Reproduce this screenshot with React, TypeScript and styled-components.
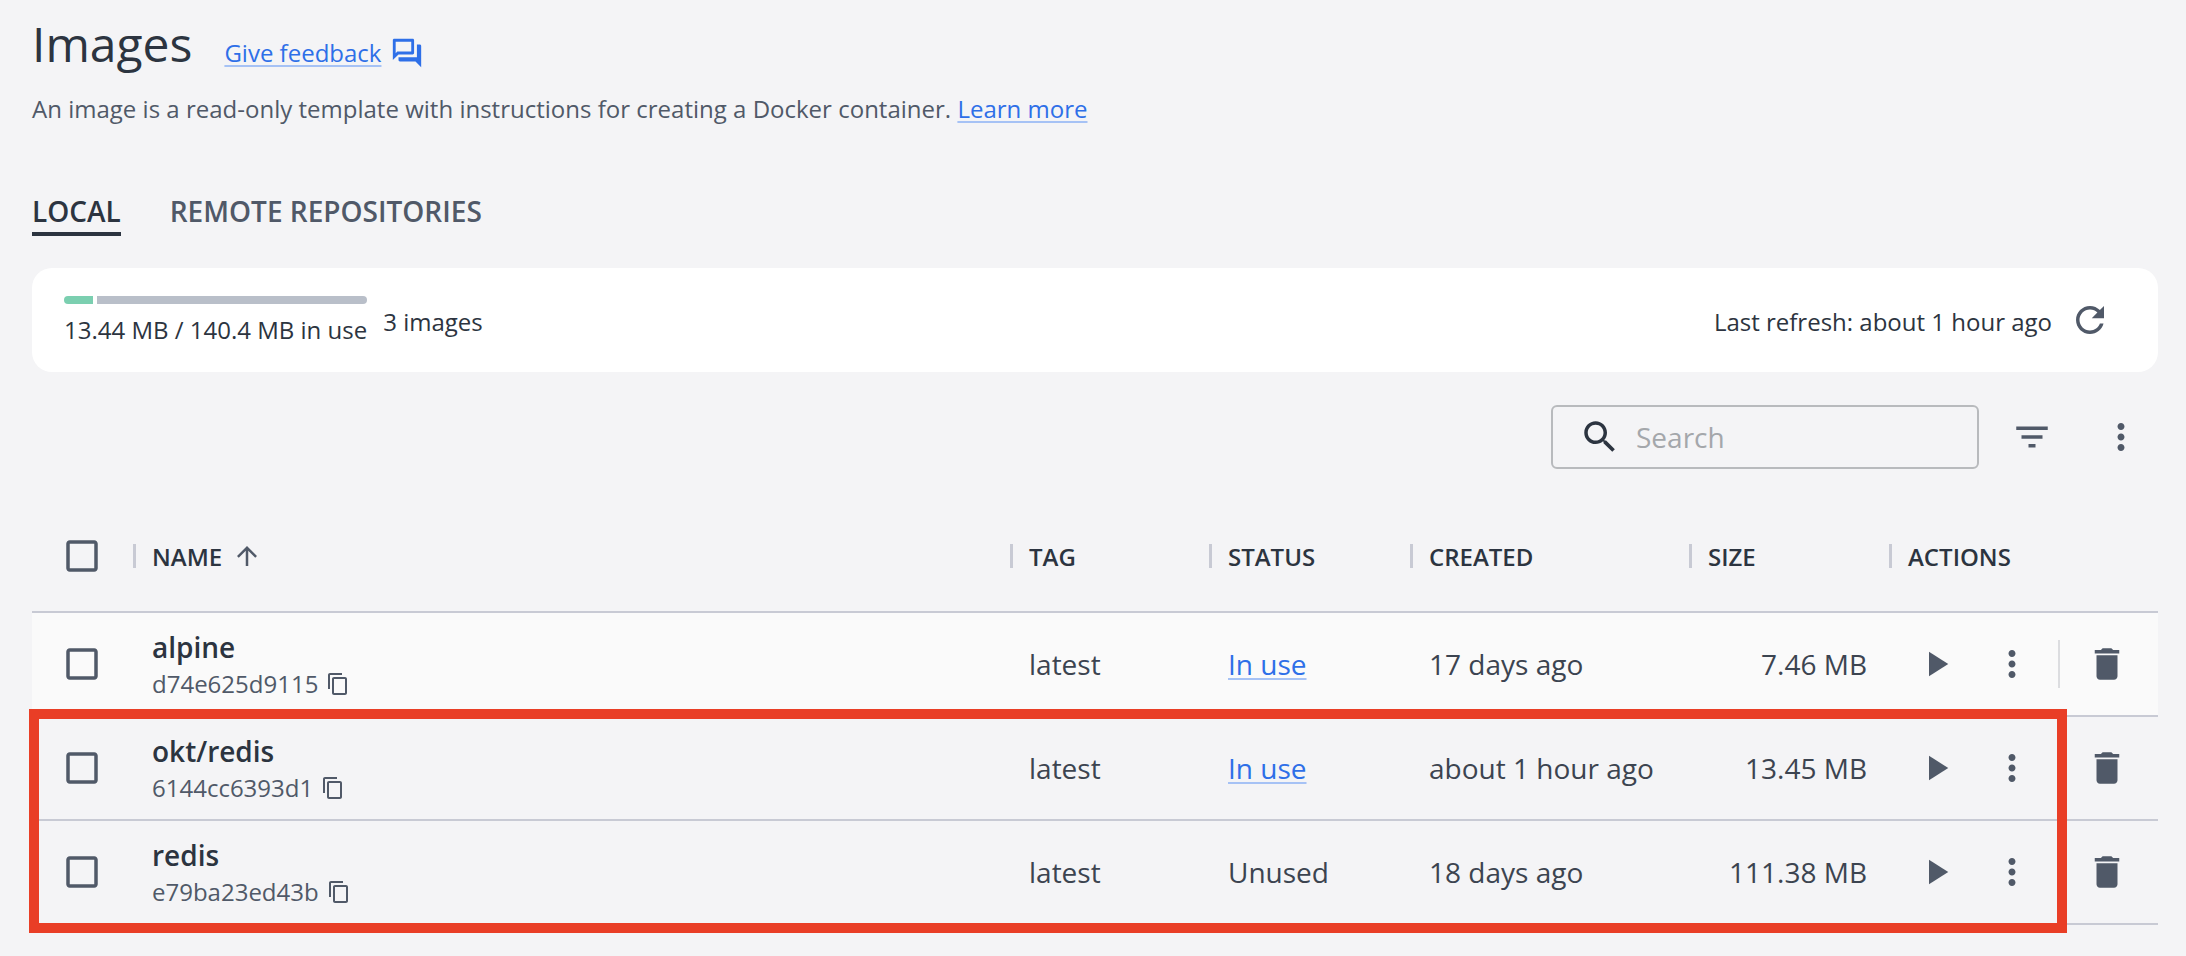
import React from 'react'
import styled, { createGlobalStyle } from 'styled-components'

const ICONS = {
  feedback: 'M15 4v7H5.17L4 12.17V4h11m1-2H3c-.55 0-1 .45-1 1v14l4-4h10c.55 0 1-.45 1-1V3c0-.55-.45-1-1-1zm5 4h-2v9H6v2c0 .55.45 1 1 1h11l4 4V7c0-.55-.45-1-1-1z',
  refresh: 'M17.65 6.35C16.2 4.9 14.21 4 12 4c-4.42 0-7.99 3.58-7.99 8s3.57 8 7.99 8c3.73 0 6.84-2.55 7.73-6h-2.08c-.82 2.33-3.04 4-5.65 4-3.31 0-6-2.69-6-6s2.69-6 6-6c1.66 0 3.14.69 4.22 1.78L13 11h7V4l-2.35 2.35z',
  search: 'M15.5 14h-.79l-.28-.27C15.41 12.59 16 11.11 16 9.5 16 5.91 13.09 3 9.5 3S3 5.91 3 9.5 5.91 16 9.5 16c1.61 0 3.09-.59 4.23-1.57l.27.28v.79l5 4.99L20.49 19l-4.99-5zm-6 0C7.01 14 5 11.99 5 9.5S7.01 5 9.5 5 14 7.01 14 9.5 11.99 14 9.5 14z',
  filter: 'M10 18h4v-2h-4v2zM3 6v2h18V6H3zm3 7h12v-2H6v2z',
  more: 'M12 8c1.1 0 2-.9 2-2s-.9-2-2-2-2 .9-2 2 .9 2 2 2zm0 2c-1.1 0-2 .9-2 2s.9 2 2 2 2-.9 2-2-.9-2-2-2zm0 6c-1.1 0-2 .9-2 2s.9 2 2 2 2-.9 2-2-.9-2-2-2z',
  play: 'M8 5v14l11-7z',
  trash: 'M6 19c0 1.1.9 2 2 2h8c1.1 0 2-.9 2-2V7H6v12zM19 4h-3.5l-1-1h-5l-1 1H5v2h14V4z',
  arrowUp: 'M4 12l1.41 1.41L11 7.83V20h2V7.83l5.58 5.59L20 12l-8-8-8 8z',
  checkbox: 'M19 5v14H5V5h14m0-2H5c-1.1 0-2 .9-2 2v14c0 1.1.9 2 2 2h14c1.1 0 2-.9 2-2V5c0-1.1-.9-2-2-2z',
  copy: 'M16 1H4c-1.1 0-2 .9-2 2v14h2V3h12V1zm3 4H8c-1.1 0-2 .9-2 2v14c0 1.1.9 2 2 2h11c1.1 0 2-.9 2-2V7c0-1.1-.9-2-2-2zm0 16H8V7h11v14z',
}

const Icon: React.FC<{ name: keyof typeof ICONS; size: number; color?: string }> = ({ name, size, color = '#505968' }) => (
  <svg width={size} height={size} viewBox="0 0 24 24" fill={color} style={{ flex: 'none', display: 'block' }}>
    <path d={ICONS[name]} />
  </svg>
)

const images = [
  { name: 'alpine', id: 'd74e625d9115', status: 'In use', created: '17 days ago', size: '7.46 MB' },
  { name: 'okt/redis', id: '6144cc6393d1', status: 'In use', created: 'about 1 hour ago', size: '13.45 MB' },
  { name: 'redis', id: 'e79ba23ed43b', status: 'Unused', created: '18 days ago', size: '111.38 MB' },
]

type Image = (typeof images)[number]

const ImageRow: React.FC<{ image: Image; active?: boolean }> = ({ image, active }) => (
  <Row $active={active}>
    <CheckCell><Icon name="checkbox" size={42} /></CheckCell>
    <NameCell>
      <ImageName>{image.name}</ImageName>
      <ImageId>{image.id}<Icon name="copy" size={24} /></ImageId>
    </NameCell>
    <ValueCell>latest</ValueCell>
    <ValueCell>{image.status === 'In use' ? <Link>In use</Link> : image.status}</ValueCell>
    <ValueCell>{image.created}</ValueCell>
    <SizeCell>{image.size}</SizeCell>
    <ActionCell>
      <PlayButton><Icon name="play" size={42} /></PlayButton>
      <Icon name="more" size={42} />
      <ActionDivider $visible={active} />
      <Icon name="trash" size={42} />
    </ActionCell>
  </Row>
)

const App: React.FC = () => (
  <Page>
    <GlobalStyle />
    <TitleRow>
      <Title>Images</Title>
      <FeedbackLink>Give feedback</FeedbackLink>
      <FeedbackIcon><Icon name="feedback" size={34} color="#2e6fe8" /></FeedbackIcon>
    </TitleRow>
    <Subtitle>
      An image is a read-only template with instructions for creating a Docker container. <Link>Learn more</Link>
    </Subtitle>
    <Tabs>
      <Tab $active>LOCAL</Tab>
      <Tab>REMOTE REPOSITORIES</Tab>
    </Tabs>
    <SummaryCard>
      <UsageBlock>
        <UsageBar>
          <UsageFill />
          <UsageRest />
        </UsageBar>
        <UsageText>13.44 MB / 140.4 MB in use</UsageText>
      </UsageBlock>
      <ImageCount>3 images</ImageCount>
      <Refresh>
        <RefreshText>Last refresh: about 1 hour ago</RefreshText>
        <Icon name="refresh" size={42} />
      </Refresh>
    </SummaryCard>
    <Toolbar>
      <SearchBox>
        <Icon name="search" size={42} color="#2c3440" />
        <SearchPlaceholder>Search</SearchPlaceholder>
      </SearchBox>
      <Icon name="filter" size={42} />
      <Icon name="more" size={42} />
    </Toolbar>
    <HeaderRow>
      <CheckCell><Icon name="checkbox" size={42} /></CheckCell>
      <HeaderCell>NAME <Icon name="arrowUp" size={30} /></HeaderCell>
      <HeaderCell>TAG</HeaderCell>
      <HeaderCell>STATUS</HeaderCell>
      <HeaderCell>CREATED</HeaderCell>
      <HeaderCell>SIZE</HeaderCell>
      <HeaderCell>ACTIONS</HeaderCell>
    </HeaderRow>
    <ImageRow image={images[0]} active />
    <Highlighted>
      <ImageRow image={images[1]} />
      <ImageRow image={images[2]} />
      <RedFrame />
    </Highlighted>
  </Page>
)

export default App

const GlobalStyle = createGlobalStyle`
  body {
    margin: 0;
    background: #f4f4f6;
    font-family: "Open Sans", "Liberation Sans", sans-serif;
    color: #2c3440;
  }
`

const Page = styled.div`
  box-sizing: border-box;
  width: 2186px;
  height: 956px;
  padding: 6px 28px 0 32px;
  overflow: hidden;
`

const TitleRow = styled.div`
  display: flex;
  align-items: baseline;
  height: 76px;
`

const Title = styled.h1`
  margin: 0 32px 0 0;
  font-size: 48px;
  font-weight: 400;
  line-height: 76px;
`

const Link = styled.span`
  color: #2e6fe8;
  text-decoration: underline;
  text-decoration-color: #a6c2f5;
  text-underline-offset: 3px;
`

const FeedbackLink = styled(Link)`
  font-size: 24px;
  margin-right: 9px;
`

const FeedbackIcon = styled.div`
  align-self: flex-start;
  margin-top: 30px;
`

const Subtitle = styled.p`
  margin: 10px 0 0;
  font-size: 24px;
  line-height: 34px;
  color: #505968;
  word-spacing: 0.05px;
`

const Tabs = styled.div`
  display: flex;
  gap: 49px;
  margin-top: 64px;
`

const Tab = styled.div<{ $active?: boolean }>`
  height: 46px;
  box-sizing: border-box;
  font-size: 28px;
  line-height: 42px;
  font-weight: 600;
  color: ${(p) => (p.$active ? '#2c3440' : '#505968')};
  border-bottom: 4px solid ${(p) => (p.$active ? '#2c3440' : 'transparent')};
`

const SummaryCard = styled.div`
  display: flex;
  align-items: center;
  height: 104px;
  margin-top: 32px;
  padding: 0 47px 0 32px;
  background: #fff;
  border-radius: 20px;
`

const UsageBlock = styled.div`
  display: flex;
  flex-direction: column;
  gap: 9px;
  padding-top: 3px;
`

const UsageBar = styled.div`
  display: flex;
  gap: 4px;
  height: 8px;
`

const UsageFill = styled.div`
  width: 29px;
  background: #7bcfb0;
  border-radius: 4px 0 0 4px;
`

const UsageRest = styled.div`
  flex: 1;
  background: #b9bfc9;
  border-radius: 0 4px 4px 0;
`

const UsageText = styled.div`
  font-size: 24px;
  line-height: 34px;
`

const ImageCount = styled.div`
  margin-left: 16px;
  padding-top: 4px;
  font-size: 24px;
  line-height: 34px;
`

const Refresh = styled.div`
  display: flex;
  align-items: center;
  gap: 17px;
  margin-left: auto;
  font-size: 24px;
`

const RefreshText = styled.span`
  padding-top: 2px;
`

const Toolbar = styled.div`
  display: flex;
  align-items: center;
  justify-content: flex-end;
  gap: 47px;
  height: 64px;
  margin-top: 33px;
  padding-right: 16px;
`

const SearchBox = styled.div`
  display: flex;
  align-items: center;
  gap: 15px;
  box-sizing: border-box;
  width: 428px;
  height: 64px;
  margin-right: -15px;
  padding-left: 26px;
  border: 2px solid #b8babd;
  border-radius: 6px;
`

const SearchPlaceholder = styled.span`
  font-size: 28px;
  color: #a4a7ab;
`

const gridColumns = '101px 877px 199px 201px 279px 200px 269px'

const HeaderRow = styled.div`
  display: grid;
  grid-template-columns: ${gridColumns};
  align-items: center;
  box-sizing: border-box;
  height: 144px;
  padding-top: 32px;
  border-bottom: 2px solid #c8cad4;
`

const CheckCell = styled.div`
  padding-left: 29px;
`

const HeaderCell = styled.div`
  display: flex;
  align-items: center;
  gap: 10px;
  height: 24px;
  padding-left: 16px;
  border-left: 3px solid #c8cad4;
  font-size: 24px;
  font-weight: 600;
`

const Row = styled.div<{ $active?: boolean }>`
  display: grid;
  grid-template-columns: ${gridColumns};
  align-items: center;
  box-sizing: border-box;
  height: 104px;
  background: ${(p) => (p.$active ? '#fafafa' : 'transparent')};
  border-bottom: 2px solid #c8cad4;
`

const NameCell = styled.div`
  padding-left: 19px;
`

const ImageName = styled.div`
  font-size: 28px;
  line-height: 38px;
  font-weight: 600;
`

const ImageId = styled.div`
  display: flex;
  align-items: center;
  gap: 8px;
  margin-top: 1px;
  font-size: 24px;
  line-height: 34px;
  color: #505968;
`

const ValueCell = styled.div`
  padding-left: 19px;
  font-size: 28px;
  color: #3c4450;
`

const SizeCell = styled(ValueCell)`
  padding: 0 22px 0 0;
  text-align: right;
`

const ActionCell = styled.div`
  display: flex;
  align-items: center;
  gap: 25px;
  padding-left: 26px;
`

const PlayButton = styled.div`
  margin-right: 9px;
`

const ActionDivider = styled.div<{ $visible?: boolean }>`
  width: 2px;
  height: 48px;
  margin-right: 1px;
  background: ${(p) => (p.$visible ? '#dcdde0' : 'transparent')};
`

const Highlighted = styled.div`
  position: relative;
`

const RedFrame = styled.div`
  position: absolute;
  top: -8px;
  bottom: -8px;
  left: -3px;
  right: 91px;
  border: 10px solid #e93e26;
  pointer-events: none;
`
